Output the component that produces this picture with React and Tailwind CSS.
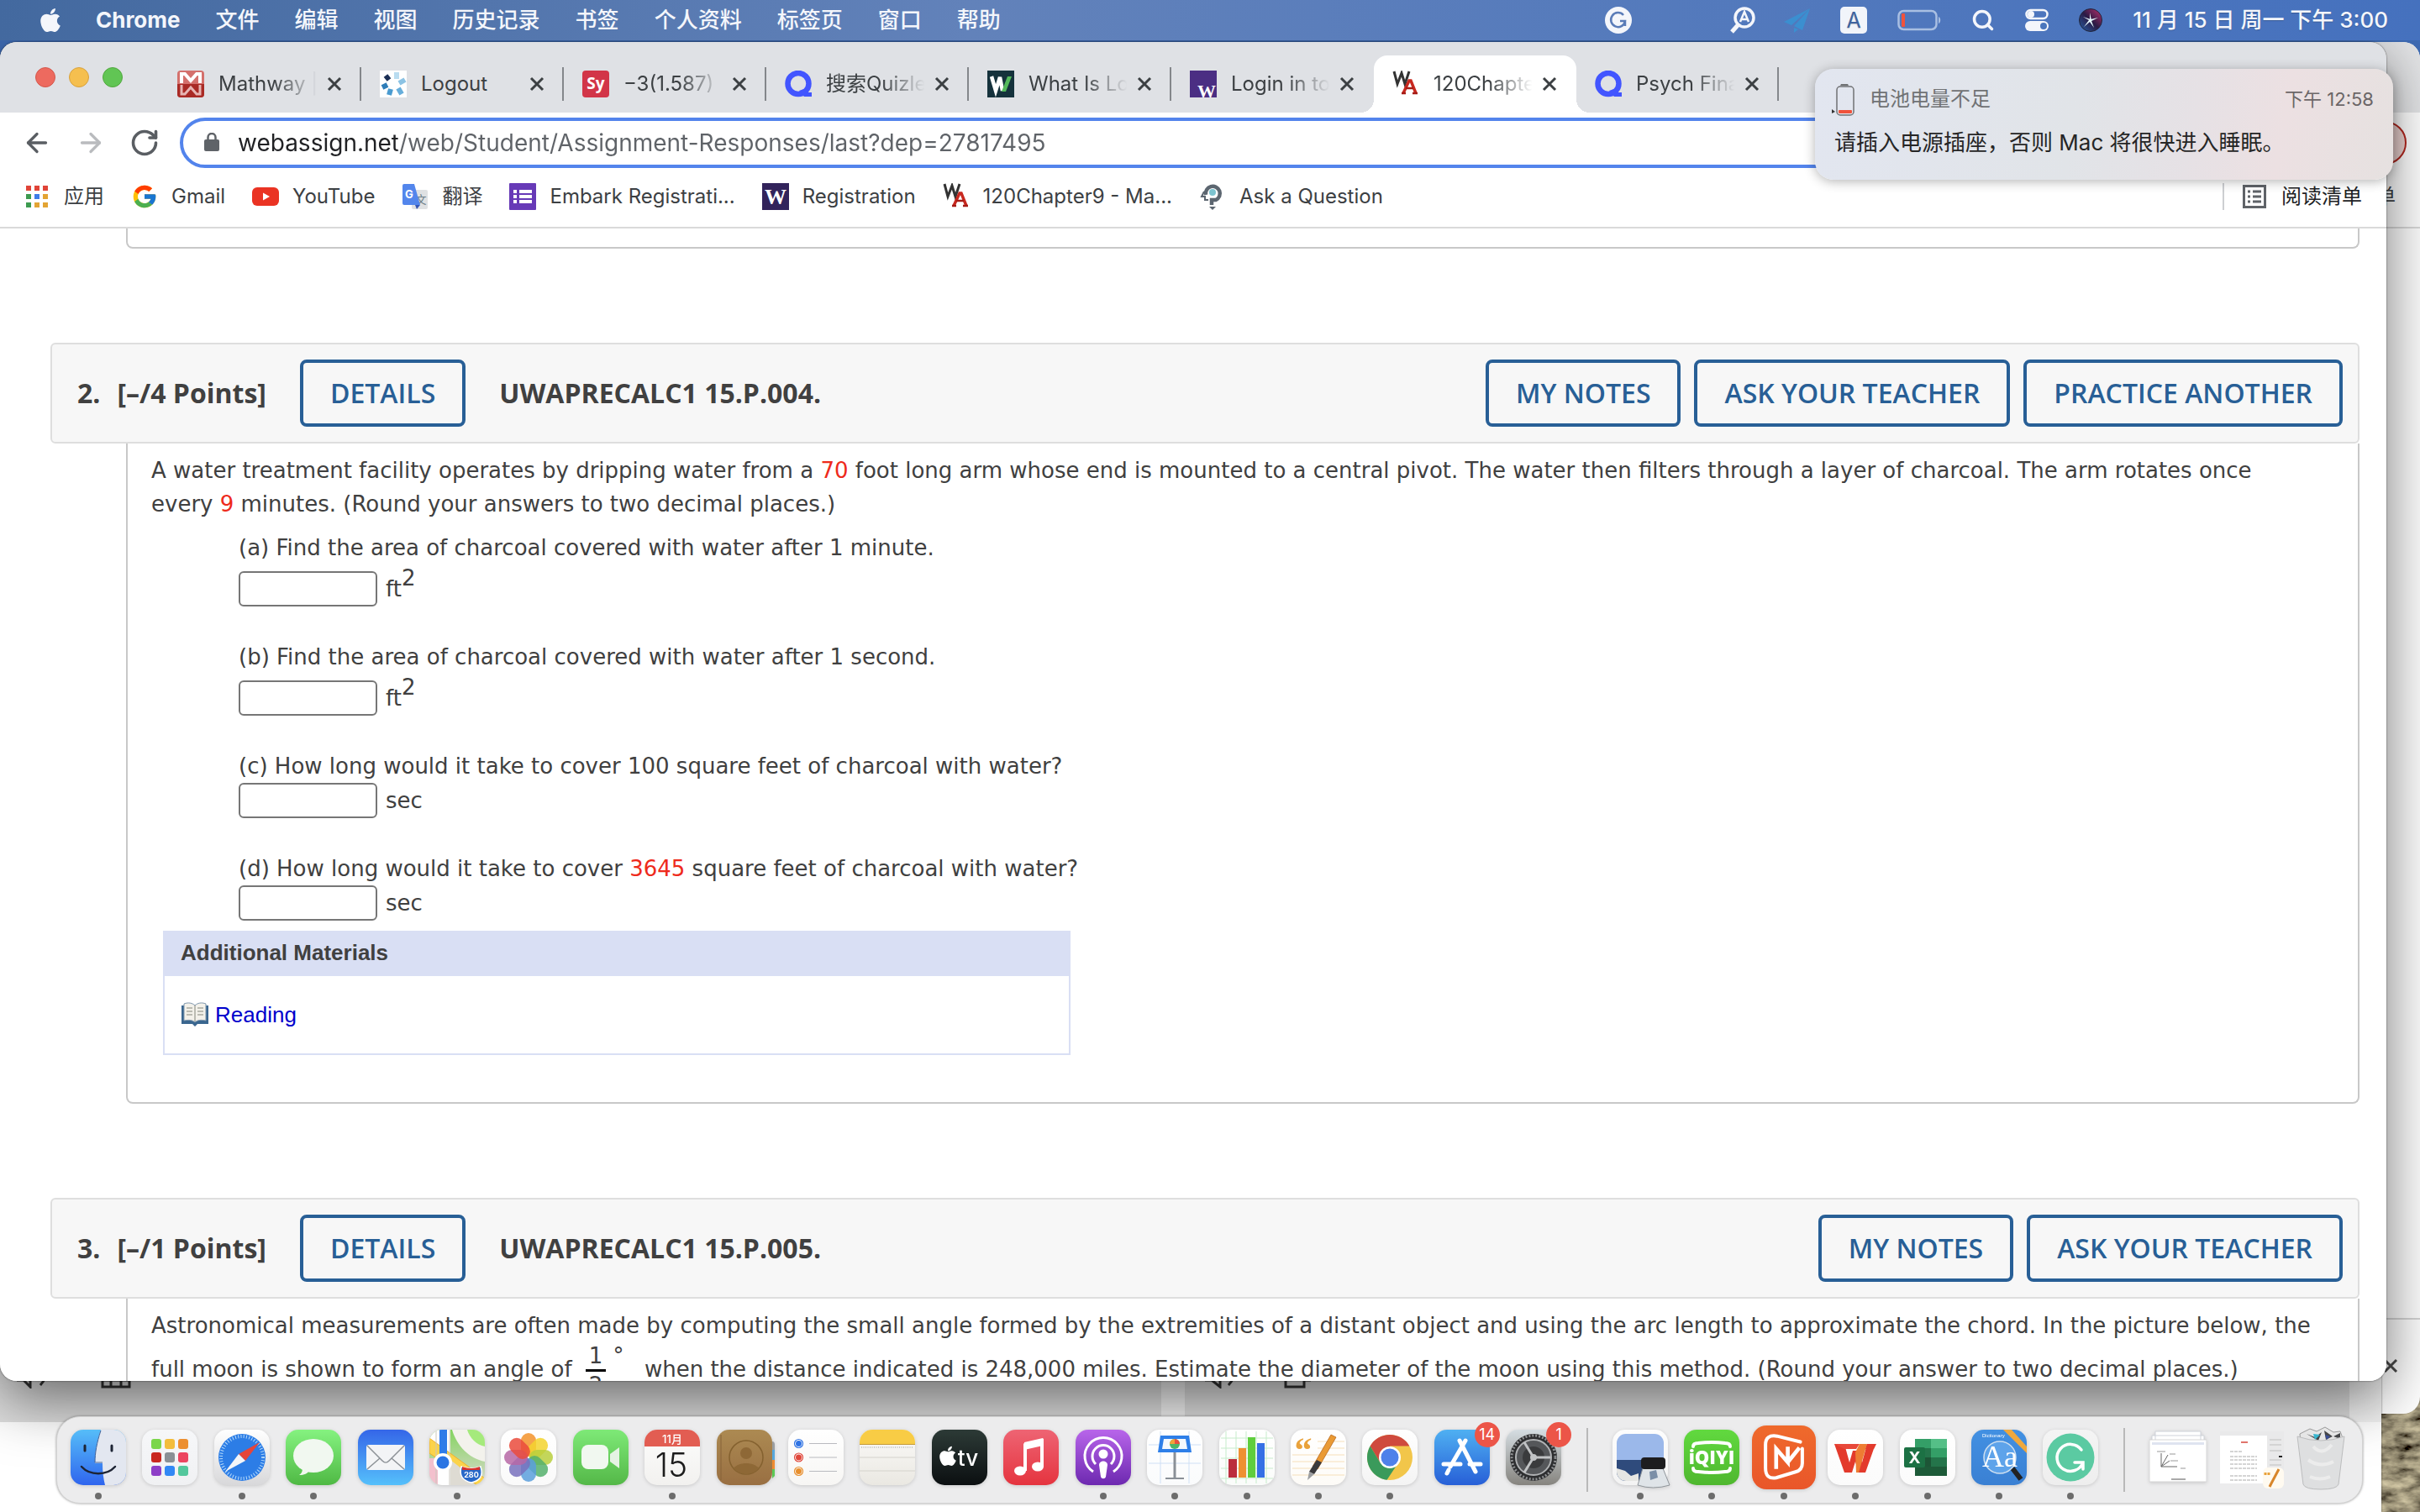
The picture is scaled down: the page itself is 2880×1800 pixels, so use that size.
import { FaApple } from 'react-icons/fa';
import { FcGoogle } from 'react-icons/fc';
import { RotateCw, ArrowLeft, ArrowRight, Search } from 'lucide-react';

const menus = ['文件', '编辑', '视图', '历史记录', '书签', '个人资料', '标签页', '窗口', '帮助'];

/* ---------- favicons ---------- */

const MathwayIcon = () => (
  <svg viewBox="0 0 32 32" className="size-8 shrink-0">
    <rect width="32" height="32" rx="4" fill="#d4706c" />
    <path d="M0 16h32v12a4 4 0 0 1-4 4H4a4 4 0 0 1-4-4z" fill="#a92a25" />
    <path d="M5 15V4h4l7 8 7-8h4v11" fill="none" stroke="#fff" strokeWidth="4" />
    <path d="M5 17v11h4l7-8 7 8h4V17" fill="none" stroke="#e7b5b3" strokeWidth="3" />
  </svg>
);

const LogoutIcon = () => (
  <svg viewBox="0 0 32 32" className="size-8 shrink-0">
    <rect width="32" height="32" fill="#fff" />
    <g strokeWidth="6">
      <path d="M20 2v8" stroke="#b9dcf0" />
      <path d="M23 15l7-4" stroke="#8cc3e4" />
      <path d="M22 21l4 7" stroke="#67aedb" />
      <path d="M13 22l-2 7" stroke="#4a9bd0" />
      <path d="M9 17l-6 3" stroke="#2e7db8" />
      <path d="M11 11L7 6" stroke="#1b2f55" />
    </g>
  </svg>
);

const SymbolabIcon = () => (
  <svg viewBox="0 0 32 32" className="size-8 shrink-0">
    <rect width="32" height="32" rx="4" fill="#d23548" />
    <text x="16" y="22" fontSize="19" fontWeight="700" fill="#fff" textAnchor="middle" fontFamily="Open Sans, sans-serif">Sy</text>
  </svg>
);

const QuizletIcon = () => (
  <svg viewBox="0 0 32 32" className="size-8 shrink-0">
    <circle cx="16" cy="15.500" r="12.500" fill="none" stroke="#4255ff" strokeWidth="6.500" />
    <path d="M17 24l8-3 3 5 4 0v5h-9z" fill="#4255ff" />
  </svg>
);

const WordIcon = () => (
  <svg viewBox="0 0 32 32" className="size-8 shrink-0">
    <rect width="32" height="32" fill="#15323c" />
    <path d="M5 7l5 17 5-16 3 16" fill="none" stroke="#fff" strokeWidth="4.500" />
    <path d="M17 25h5l7-18h-5z" fill="#54b95c" />
  </svg>
);

const UwTabIcon = () => (
  <svg viewBox="0 0 32 32" className="size-8 shrink-0">
    <rect width="32" height="32" fill="#4b2e83" />
    <text x="20" y="32" fontSize="22" fontWeight="700" fill="#fff" textAnchor="middle" fontFamily="Liberation Serif, serif">W</text>
  </svg>
);

const UwIcon = () => (
  <svg viewBox="0 0 32 32" className="size-8 shrink-0">
    <rect width="32" height="32" fill="#32235b" />
    <text x="16" y="25" fontSize="26" fontWeight="700" fill="#fff" textAnchor="middle" fontFamily="Liberation Serif, serif">W</text>
  </svg>
);

const WebAssignIcon = () => (
  <svg viewBox="0 0 32 32" className="size-8 shrink-0" fill="none">
    <path d="M2 1l4 15 5-13 4 13 5-15" stroke="#333" strokeWidth="3" />
    <path d="M13 27l7-15 2 0 6 15" stroke="#c8281f" strokeWidth="3.500" />
    <path d="M16 21h9M11 27h5M24 27h6" stroke="#a51c16" strokeWidth="2.500" />
  </svg>
);

const AppsIcon = () => (
  <svg viewBox="0 0 32 32" className="size-8 shrink-0">
    <path d="M3 3h6v6H3zM13 3h6v6h-6zM23 3h6v6h-6z" fill="#e04438" />
    <path d="M3 13h6v6H3z" fill="#3d9b50" />
    <path d="M13 13h6v6h-6z" fill="#3f7de8" />
    <path d="M23 13h6v6h-6zM13 23h6v6h-6zM23 23h6v6h-6z" fill="#e3a434" />
    <path d="M3 23h6v6H3z" fill="#3d9b50" />
  </svg>
);

const YouTubeIcon = () => (
  <svg viewBox="0 0 32 32" className="size-8 shrink-0">
    <rect y="5" width="32" height="22" rx="6" fill="#ea3323" />
    <path d="M13 11.500v9l8-4.500z" fill="#fff" />
  </svg>
);

const TranslateIcon = () => (
  <svg viewBox="0 0 32 32" className="size-8 shrink-0">
    <rect x="12" y="8" width="19" height="23" rx="2" fill="#dfe1e3" />
    <text x="23" y="24" fontSize="13" fill="#6b7d86" textAnchor="middle" fontFamily="Noto Sans CJK SC, sans-serif">文</text>
    <path d="M3 1h12l7 25H3a2 2 0 0 1-2-2V3a2 2 0 0 1 2-2z" fill="#5386ec" />
    <path d="M16 26h6l-4 5z" fill="#3656b5" />
    <text x="9" y="18" fontSize="13" fontWeight="700" fill="#fff" textAnchor="middle" fontFamily="Inter, sans-serif">G</text>
  </svg>
);

const FormIcon = () => (
  <svg viewBox="0 0 32 32" className="size-8 shrink-0">
    <rect width="32" height="32" rx="1" fill="#673ab7" />
    <path d="M5 8h4v4H5zM12 8h15v4H12zM5 14h4v4H5zM12 14h15v4H12zM5 20h4v4H5zM12 20h15v4H12z" fill="#fff" />
  </svg>
);

const AskIcon = () => (
  <svg viewBox="0 0 32 32" className="size-8 shrink-0" fill="none">
    <path d="M8 14a8.500 8.500 0 1 1 12 6h-5v6" stroke="#5c6670" strokeWidth="4.500" />
    <circle cx="16" cy="11" r="4" fill="#7cc3cf" />
    <path d="M6 10l-3 6h4v4h4" stroke="#5c6670" strokeWidth="2" />
    <path d="M12 28h8l-4 4z" fill="#5c6670" />
  </svg>
);

const Cross = () => (
  <svg viewBox="0 0 18 18" className="size-[18px]" stroke="currentColor" strokeWidth="3">
    <path d="M2 2l14 14M16 2L2 16" />
  </svg>
);

/* ---------- menu bar ---------- */

function MenuBar() {
  return (
    <header className="relative z-30 flex h-12 shrink-0 items-center justify-between bg-linear-to-r from-[#43699f] via-[#6282ba] via-40% to-[#4571be] pl-11 pr-[38px] text-[26px] leading-8 text-[#f4f6fb] text-shadow-xs">
      <nav className="flex items-center gap-[42px]">
        <FaApple className="-mr-1 size-8" />
        <button type="button" className="font-bold">Chrome</button>
        {menus.map((m) => (
          <button type="button" key={m} className="font-medium">{m}</button>
        ))}
      </nav>
      <div className="flex items-center gap-9">
        <svg viewBox="0 0 32 32" className="mr-20 size-8" fill="none">
          <circle cx="16" cy="16" r="16" fill="#f4f6fb" />
          <path d="M22 10a8.500 8.500 0 1 0 2 7h-6M24 17v6" stroke="#5a7cb8" strokeWidth="2.500" />
        </svg>
        <svg viewBox="0 0 32 32" className="-mr-1 size-8" fill="none" stroke="#f4f6fb">
          <circle cx="18" cy="13" r="11" strokeWidth="3.500" />
          <path d="M11 21l-8 9" strokeWidth="5" />
          <path d="M13 18l5-12 5 12M15 15h6" strokeWidth="2.500" />
        </svg>
        <svg viewBox="0 0 32 32" className="size-8" fill="#3b8fd0">
          <path d="M32 2L1 18l9 4zM32 2L13 23l10 5zM13 25v6l5-4z" />
        </svg>
        <svg viewBox="0 0 32 32" className="size-8">
          <rect width="32" height="32" rx="5" fill="#f1f4fa" />
          <text x="16" y="25" fontSize="25" fill="#3e639f" textAnchor="middle" fontFamily="Inter, sans-serif">A</text>
        </svg>
        <svg viewBox="0 0 52 26" className="h-[26px] w-[52px]" fill="none">
          <rect x="1.500" y="2" width="45" height="22" rx="6" stroke="#a9bfe2" strokeWidth="2.500" />
          <rect x="5" y="5" width="4" height="16" rx="1" fill="#f2523a" />
          <path d="M49 9c3 1 3 7 0 8z" fill="#a9bfe2" />
        </svg>
        <Search className="size-7" strokeWidth={3} />
        <svg viewBox="0 0 28 28" className="size-7" fill="none">
          <rect x="1.500" y="2" width="25" height="10" rx="5" stroke="#f4f6fb" strokeWidth="2.500" />
          <circle cx="7" cy="7" r="4" fill="#f4f6fb" />
          <rect y="15" width="28" height="12" rx="6" fill="#f4f6fb" />
          <circle cx="22" cy="21" r="4" fill="#4a76bd" />
        </svg>
        <svg viewBox="0 0 28 28" className="size-7">
          <defs>
            <linearGradient id="siri" x1="0" y1="1" x2="1" y2="0">
              <stop offset="0" stopColor="#2560a8" />
              <stop offset=".5" stopColor="#2a1a44" />
              <stop offset="1" stopColor="#c2316f" />
            </linearGradient>
          </defs>
          <circle cx="14" cy="14" r="13.500" fill="url(#siri)" stroke="#20263c" />
          <path d="M5 10l9 3 9-2-8 4 3 8-5-7-7 6 6-8zM13 5l2 9-2 2z" fill="#e8fbff" />
        </svg>
        <time className="font-medium whitespace-pre">11 月 15 日 周一 下午 3:00</time>
      </div>
    </header>
  );
}

/* ---------- browser chrome ---------- */

const tabs = [
  { icon: <MathwayIcon />, title: 'Mathway |' },
  { icon: <LogoutIcon />, title: 'Logout', full: true },
  { icon: <SymbolabIcon />, title: '−3(1.587)' },
  { icon: <QuizletIcon />, title: '搜索Quizle' },
  { icon: <WordIcon />, title: 'What Is Lo' },
  { icon: <UwTabIcon />, title: 'Login in to', last: true },
  { icon: <WebAssignIcon />, title: '120Chapte', active: true },
  { icon: <QuizletIcon />, title: 'Psych Fina' },
];

function Tab({ icon, title, full, last, active }) {
  return (
    <div
      className={`relative flex h-[68px] w-[241px] shrink-0 items-center pl-[22px] ${
        active
          ? 'rounded-t-2xl bg-white before:absolute before:-left-4 before:bottom-0 before:size-4 before:bg-[radial-gradient(circle_at_0_0,#dfe1e5_16px,#ffffff_16px)] after:absolute after:-right-4 after:bottom-0 after:size-4 after:bg-[radial-gradient(circle_at_100%_0,#dfe1e5_16px,#ffffff_16px)]'
          : ''
      }`}
    >
      {icon}
      <span
        className={`ml-[17px] w-[120px] whitespace-nowrap ${
          full ? '' : '[mask-image:linear-gradient(90deg,#000_55%,transparent_98%)]'
        }`}
      >
        {title}
      </span>
      <button type="button" aria-label="关闭" className="ml-[9px]">
        <Cross />
      </button>
      {!active && !last && <span className="ml-auto h-10 w-[2px] bg-[#84878b]" />}
    </div>
  );
}

const bookmarks = [
  { icon: <AppsIcon />, label: '应用' },
  { icon: <FcGoogle className="size-8 shrink-0" />, label: 'Gmail' },
  { icon: <YouTubeIcon />, label: 'YouTube' },
  { icon: <TranslateIcon />, label: '翻译' },
  { icon: <FormIcon />, label: 'Embark Registrati...' },
  { icon: <UwIcon />, label: 'Registration' },
  { icon: <WebAssignIcon />, label: '120Chapter9 - Ma...' },
  { icon: <AskIcon />, label: 'Ask a Question' },
];

function BrowserBars() {
  return (
    <div className="shrink-0 text-[24px] leading-8 text-[#3c4043]">
      <div className="flex h-[84px] items-end bg-[#dfe1e5]">
        <div className="flex w-[189px] gap-4 self-center pl-[42px]">
          <span className="size-6 rounded-full border border-[#d3574c] bg-[#ed6a5f]" />
          <span className="size-6 rounded-full border border-[#d8a13c] bg-[#f5bf4f]" />
          <span className="size-6 rounded-full border border-[#51a73e] bg-[#61c554]" />
        </div>
        {tabs.map((t) => (
          <Tab key={t.title} {...t} />
        ))}
      </div>
      <div className="flex h-[72px] items-center bg-white pl-[26px]">
        <button type="button" aria-label="后退" className="text-[#5a5e63]">
          <ArrowLeft className="size-9" strokeWidth={2.2} />
        </button>
        <button type="button" aria-label="前进" className="ml-7 text-[#b9bbbe]">
          <ArrowRight className="size-9" strokeWidth={2.2} />
        </button>
        <button type="button" aria-label="重新加载" className="ml-7 text-[#5a5e63]">
          <RotateCw className="size-9" strokeWidth={2.4} />
        </button>
        <label className="ml-6 mr-[120px] flex h-[60px] flex-1 items-center rounded-full border-4 border-[#5384ec] pl-[25px]">
          <svg viewBox="0 0 18 24" className="h-6 w-[18px]" fill="none">
            <rect y="8" width="18" height="14" rx="2" fill="#5f6368" />
            <path d="M4.500 9V5.500a4.500 4.500 0 0 1 9 0V9" stroke="#5f6368" strokeWidth="2.500" />
          </svg>
          <input
            aria-label="地址"
            defaultValue="webassign.net/web/Student/Assignment-Responses/last?dep=27817495"
            className="ml-[22px] flex-1 bg-[linear-gradient(90deg,#202124_190px,#5f6368_190px)] bg-clip-text text-[28px] leading-9 text-transparent outline-none"
          />
        </label>
      </div>
      <div className="flex h-16 items-center justify-between bg-white pr-[29px] pb-2 pl-7">
        <div className="flex items-center gap-8">
          {bookmarks.map((b) => (
            <a key={b.label} href="#bookmark" className="flex items-center gap-4 whitespace-nowrap">
              {b.icon}
              {b.label}
            </a>
          ))}
        </div>
        <button type="button" className="flex h-8 items-center gap-[18px] border-l-2 border-[#cdcfd2] pl-[22px] text-[#202124]">
          <svg viewBox="0 0 28 28" className="size-7" fill="none" stroke="#5f6368" strokeWidth="3">
            <rect x="1.500" y="1.500" width="25" height="25" />
            <path d="M6 8h3M12 8h10M6 14h3M12 14h10M6 20h3M12 20h10" />
          </svg>
          阅读清单
        </button>
      </div>
      <div className="h-[2px] bg-[#dadada]" />
    </div>
  );
}

/* ---------- assignment page ---------- */

function OutlineButton({ children }) {
  return (
    <button
      type="button"
      className="h-20 rounded-lg border-4 border-[#285f96] px-8 text-[32px] leading-10 font-semibold whitespace-nowrap text-[#285f96]"
    >
      {children}
    </button>
  );
}

function QuestionHeader({ number, points, code, actions }) {
  return (
    <div className="mr-8 ml-[60px] flex h-[120px] items-center justify-between rounded-md border-2 border-[#dedede] bg-[#f7f7f7] pr-[18px] pl-[30px] font-['Open_Sans',sans-serif] text-[32px] leading-10 font-bold text-[#404040]">
      <h2 className="flex items-center">
        <span className="mr-5">{number}.</span>
        <span className="mr-10">[–/{points} Points]</span>
        <OutlineButton>DETAILS</OutlineButton>
        <span className="ml-10">{code}</span>
      </h2>
      <div className="flex gap-4">
        {actions.map((a) => (
          <OutlineButton key={a}>{a}</OutlineButton>
        ))}
      </div>
    </div>
  );
}

const Red = ({ children }) => <span className="text-[#ee2a1c]">{children}</span>;

function Part({ id, unit, squared, children }) {
  return (
    <div className="mb-10">
      <label htmlFor={id} className="block">{children}</label>
      <div className={`flex items-center gap-[10px] ${squared ? 'pt-2' : ''}`}>
        <input id={id} className="h-[42px] w-[165px] rounded-md border-2 border-[#767676] bg-white px-2" />
        <span className="leading-10">
          {unit}
          {squared && <sup className="text-[26px]">2</sup>}
        </span>
      </div>
    </div>
  );
}

function Page() {
  return (
    <main className="min-h-0 flex-1 overflow-hidden bg-white font-['DejaVu_Sans',sans-serif] text-[26px] leading-10 text-[#404040]">
      <div className="mr-8 ml-[150px] h-6 rounded-b-lg border-2 border-t-0 border-[#c8c8c8]" />

      <section className="mt-28">
        <QuestionHeader
          number="2"
          points="4"
          code="UWAPRECALC1 15.P.004."
          actions={['MY NOTES', 'ASK YOUR TEACHER', 'PRACTICE ANOTHER']}
        />
        <div className="mr-8 ml-[150px] rounded-b-lg border-2 border-t-0 border-[#c8c8c8] pt-3 pr-10 pb-14 pl-7">
          <p>
            A water treatment facility operates by dripping water from a <Red>70</Red> foot long arm whose end is mounted
            to a central pivot. The water then filters through a layer of charcoal. The arm rotates once
            <br />
            every <Red>9</Red> minutes. (Round your answers to two decimal places.)
          </p>
          <div className="mt-3 ml-[104px]">
            <Part id="a" unit="ft" squared>(a) Find the area of charcoal covered with water after 1 minute.</Part>
            <Part id="b" unit="ft" squared>(b) Find the area of charcoal covered with water after 1 second.</Part>
            <Part id="c" unit="sec">(c) How long would it take to cover 100 square feet of charcoal with water?</Part>
            <Part id="d" unit="sec">
              (d) How long would it take to cover <Red>3645</Red> square feet of charcoal with water?
            </Part>
          </div>
          <div className="-mt-7 ml-[14px] w-[1080px] border-2 border-[#d9dff4] font-['Liberation_Sans',sans-serif]">
            <h3 className="bg-[#d9dff4] px-[19px] pt-1 pb-2 font-bold">Additional Materials</h3>
            <a href="#reading" className="flex h-[92px] items-center gap-2 px-5 text-[#0000cc]">
              <svg viewBox="0 0 32 30" className="h-[30px] w-8">
                <path d="M0 4h32v22H19l-3 3-3-3H0z" fill="#3a668f" />
                <path d="M3 2c5-2 10-1 13 2 3-3 8-4 13-2v20c-5-1-10-1-13 2-3-3-8-3-13-2z" fill="#f3f1ea" stroke="#7d95ab" />
                <path d="M16 4v19M6 7h7M6 11h7M6 15h7M19 7h7M19 11h7M19 15h7" stroke="#a9a9a0" strokeWidth="1.500" />
              </svg>
              Reading
            </a>
          </div>
        </div>
      </section>

      <section className="mt-28">
        <QuestionHeader
          number="3"
          points="1"
          code="UWAPRECALC1 15.P.005."
          actions={['MY NOTES', 'ASK YOUR TEACHER']}
        />
        <div className="mr-8 ml-[150px] border-x-2 border-[#c8c8c8] pt-3 pl-7">
          <p className="whitespace-nowrap">
            Astronomical measurements are often made by computing the small angle formed by the extremities of a distant
            object and using the arc length to approximate the chord. In the picture below, the
            <br />
            full moon is shown to form an angle of{' '}
            <span className="mr-2 inline-flex items-start gap-2 pl-2 align-middle">
              <span className="flex flex-col text-center leading-8">
                <span className="border-b-[3px] border-black px-1">1</span>
                <span>2</span>
              </span>
              <span className="leading-8">°</span>
            </span>{' '}
            &nbsp;when the distance indicated is 248,000 miles. Estimate the diameter of the moon using this method. (Round
            your answer to two decimal places.)
          </p>
        </div>
      </section>
    </main>
  );
}

/* ---------- dock ---------- */

function Tile({ from, to, children, rx = 15 }) {
  const id = `g${from}${to}`.replace(/#/g, '');
  return (
    <svg viewBox="0 0 66 66" className="size-full overflow-visible">
      <defs>
        <linearGradient id={id} x1="0" y1="0" x2="0" y2="1">
          <stop offset="0" stopColor={from} />
          <stop offset="1" stopColor={to} />
        </linearGradient>
        <clipPath id="tile">
          <rect width="66" height="66" rx="15" />
        </clipPath>
      </defs>
      <rect width="66" height="66" rx={rx} fill={`url(#${id})`} />
      {children}
    </svg>
  );
}

const petals = ['#f3932b', '#f3d42f', '#b9cf3d', '#55b06c', '#5a9fdc', '#7871bd', '#b667a6', '#ea4b3c'];
const pads = [
  ['#7bd64b', '#f3bd3c', '#ec8f31'],
  ['#c9281f', '#8a9095', '#ec4560'],
  ['#8d3fc7', '#3288f5', '#53c79c'],
];

const Finder = () => (
  <Tile from="#56bdf8" to="#2f65ee">
    <g clipPath="url(#tile)">
      <path d="M36 0c-5 15-7 28-7 40h9c0 10 1 18 3 26h25V0z" fill="#e3e7f0" />
    </g>
    <path d="M17 19v6M49 19v6" stroke="#1d2434" strokeWidth="3" strokeLinecap="round" />
    <path d="M36 1c-5 15-7 27-7 38h9" stroke="#40639b" fill="none" />
    <path d="M13 44c10 11 30 11 40 0" stroke="#1d2434" strokeWidth="2.500" fill="none" strokeLinecap="round" />
  </Tile>
);
const Launchpad = () => (
  <Tile from="#f6f7f9" to="#f0f1f3">
    {pads.map((row, y) =>
      row.map((c, x) => <rect key={c} x={11 + x * 16} y={11 + y * 16} width="12" height="12" rx="3" fill={c} />)
    )}
  </Tile>
);
const Safari = () => (
  <Tile from="#ffffff" to="#d8d8da">
    <circle cx="33" cy="33" r="28" fill="#2c7de6" />
    <circle cx="33" cy="33" r="25" fill="none" stroke="#b8dcfb" strokeWidth="4" strokeDasharray="1 2.300" />
    <path d="M54 15L29 29l8 8z" fill="#e5453a" />
    <path d="M13 50l16-21 8 8z" fill="#f3f5f8" />
  </Tile>
);
const Messages = () => (
  <Tile from="#85f280" to="#4fb944">
    <ellipse cx="33" cy="31" rx="24" ry="20" fill="#f1f8f0" />
    <path d="M20 45c0 5-1 7-4 9 6 0 10-2 12-5z" fill="#f1f8f0" />
  </Tile>
);
const Mail = () => (
  <Tile from="#3566e8" to="#55c0fb">
    <rect x="10" y="18" width="46" height="30" rx="3" fill="#f3f4f6" />
    <path d="M11 19l18 18c3 3 5 3 8 0l18-18M11 47l15-13M55 47L40 34" stroke="#8c9196" strokeWidth="1.500" fill="none" />
  </Tile>
);
const Maps = () => (
  <Tile from="#84d460" to="#dcd9d1">
    <g clipPath="url(#tile)">
      <path d="M0 34h10v32H0z" fill="#f3c0cd" />
      <path d="M0 0h25v66H10V30L0 24z" fill="#fff" />
      <path d="M0 10l66 48v14L0 28z" fill="#fbd34b" stroke="#eeb02e" />
      <path d="M8 0v66M24 0v66" stroke="#c9c6bd" />
      <path d="M27 0h39v38C47 34 33 20 27 0z" fill="#f3f2ec" />
      <path d="M45 0h21v20C56 18 48 10 45 0z" fill="#a5ea7c" />
      <path d="M25 66V36l26 20 2 10z" fill="#dedbd3" />
      <path d="M12 0h9v36h-9z" fill="#2f7ce8" />
    </g>
    <circle cx="16" cy="39" r="11" fill="#fff" />
    <circle cx="16" cy="39" r="7.500" fill="#2b75e3" />
    <path d="M38 44q12 4 23 0c4 12-2 17-11 19-10-2-15-8-12-19z" fill="#2868c8" stroke="#fff" strokeWidth="1.500" />
    <path d="M39 44q11 4 21 0v4H39z" fill="#d8322c" />
    <text x="50" y="57" fontSize="9" fontWeight="700" fill="#fff" textAnchor="middle" fontFamily="Inter, sans-serif">280</text>
  </Tile>
);
const Photos = () => (
  <Tile from="#ffffff" to="#fafafa">
    {petals.map((c, i) => (
      <rect key={c} x="24" y="4" width="18" height="28" rx="9" fill={c} opacity=".85" transform={`rotate(${i * 45} 33 33)`} />
    ))}
  </Tile>
);
const FaceTime = () => (
  <Tile from="#7ee977" to="#54b848">
    <rect x="10" y="18" width="32" height="29" rx="8" fill="#f1f8f0" />
    <path d="M44 29l11-8v25l-11-8z" fill="#e5f3e3" />
  </Tile>
);
const Calendar = () => (
  <Tile from="#fdfdfc" to="#f2f1ef">
    <path d="M0 20V15A15 15 0 0 1 15 0h36a15 15 0 0 1 15 15v5z" fill="#e25d52" />
    <text x="33" y="16" fontSize="13" fontWeight="500" fill="#fff" textAnchor="middle" fontFamily="Inter, Noto Sans CJK SC, sans-serif">11月</text>
    <text x="32" y="56" fontSize="39" fontWeight="300" fill="#1c1c1c" textAnchor="middle" fontFamily="Inter, sans-serif">15</text>
  </Tile>
);
const Contacts = () => (
  <Tile from="#ac8a52" to="#996f42">
    <path d="M66 14q3 0 3 4v6h-3z" fill="#9a9da0" />
    <path d="M66 24h3v12h-3z" fill="#56a7dc" />
    <path d="M66 36h3v11h-3z" fill="#ee8b31" />
    <path d="M66 47h3v8l-3 3z" fill="#5cc956" />
    <path d="M5 6v54" stroke="#866238" />
    <circle cx="35" cy="33" r="20" fill="none" stroke="#84612f" strokeWidth="1.500" />
    <circle cx="35" cy="28" r="7" fill="#8e6836" />
    <path d="M20 46c6-8 24-8 30 0-7 9-23 9-30 0z" fill="#8e6836" />
  </Tile>
);
const Reminders = () => (
  <Tile from="#ffffff" to="#f7f6f4">
    {['#2f73e4', '#e0463a', '#e88f2e'].map((c, i) => (
      <g key={c}>
        <circle cx="12.500" cy={16.5 + i * 16.5} r="5" fill="none" stroke={c} strokeWidth="1.200" />
        <circle cx="12.500" cy={16.5 + i * 16.5} r="3.500" fill={c} />
        <path d={`M25 ${16.5 + i * 16.5}h33`} stroke="#b9babf" />
      </g>
    ))}
  </Tile>
);
const Notes = () => (
  <Tile from="#fbfaf8" to="#eae8e2">
    <path d="M0 17V15A15 15 0 0 1 15 0h36a15 15 0 0 1 15 15v2z" fill="#f8cc45" />
    <path d="M0 17.500h66" stroke="#c49b38" />
    <path d="M2 21h62" stroke="#bbb" strokeWidth="1.500" strokeDasharray="1 1.500" />
    <path d="M0 33h66M0 49h66" stroke="#d4d2cc" />
  </Tile>
);
const AppleTv = () => (
  <Tile from="#2c3a36" to="#0b0f11">
    <g transform="translate(9 18) scale(.052)" fill="#fff">
      <path d="M318.700 268.700c-.2-36.700 16.400-64.400 50-84.800-18.800-26.900-47.200-41.700-84.700-44.600-35.500-2.800-74.300 20.700-88.500 20.700-15 0-49.400-19.700-76.400-19.700C63.300 141.200 4 184.800 4 273.500q0 39.300 14.400 81.200c12.800 36.700 59 126.700 107.200 125.200 25.200-.6 43-17.900 75.800-17.900 31.800 0 48.300 17.900 76.400 17.900 48.600-.7 90.400-82.500 102.600-119.300-65.200-30.700-61.700-90-61.700-91.900zm-56.600-164.200c27.300-32.400 24.800-61.900 24-72.500-24.100 1.400-52 16.400-67.900 34.900-17.500 19.800-27.800 44.300-25.600 71.900 26.100 2 49.900-11.400 69.500-34.300z" />
    </g>
    <text x="43" y="43" fontSize="26" fontWeight="500" fill="#fff" textAnchor="middle" fontFamily="Inter, sans-serif">tv</text>
  </Tile>
);
const Music = () => (
  <Tile from="#ee6473" to="#e5343f">
    <path d="M26 49V18l20-5v31" stroke="#fff" strokeWidth="4" fill="none" />
    <path d="M25 15l22-5v9l-22 5z" fill="#fff" />
    <ellipse cx="20" cy="49" rx="7" ry="5.500" fill="#fff" />
    <ellipse cx="41" cy="44" rx="7" ry="5.500" fill="#fff" />
  </Tile>
);
const Podcasts = () => (
  <Tile from="#b865ea" to="#6d29b0">
    <g fill="none" stroke="#fff" strokeWidth="3">
      <path d="M21 50a22 22 0 1 1 24 0" />
      <path d="M24 41a13 13 0 1 1 18 0" />
    </g>
    <circle cx="33" cy="29" r="5.500" fill="#fff" />
    <path d="M28 42c0-6 10-6 10 0l-2 14c-1 3-5 3-6 0z" fill="#fff" />
  </Tile>
);
const Keynote = () => (
  <Tile from="#ffffff" to="#fafbfc">
    <path d="M2 18h62M2 40h62M16 2v62M50 2v62" stroke="#cfe0f5" />
    <path d="M33 27v31" stroke="#8a9097" strokeWidth="3" />
    <path d="M22 58h22" stroke="#8a9097" strokeWidth="2" />
    <path d="M16 7h34l3 20H13z" fill="#2e7fe8" />
    <path d="M20 11h26l2 12H18z" fill="#f4f8fd" />
    <circle cx="33" cy="17" r="6" fill="#4cb56b" />
    <path d="M33 17v-6a6 6 0 0 1 6 6z" fill="#e8503f" />
    <path d="M33 17l-6 0a6 6 0 0 1 6-6z" fill="#f0a43a" />
  </Tile>
);
const Numbers = () => (
  <Tile from="#ffffff" to="#fafcfa">
    <path d="M8 2v62M20 2v62M32 2v62M44 2v62M56 2v62M2 10h62M2 22h62M2 34h62M2 46h62M2 58h62" stroke="#c6eccb" />
    <path d="M11 35h10v22H11z" fill="#bb2d3c" />
    <path d="M23 22h9v35h-9z" fill="#ee9131" />
    <path d="M34 9h9v48h-9z" fill="#5fce3d" />
    <path d="M45 16h9v41h-9z" fill="#3570e5" />
  </Tile>
);
const Pages = () => (
  <Tile from="#ffffff" to="#fdfbf7">
    <path d="M2 30h62M2 38h62M2 46h62M2 54h62M32 14h32M32 22h32" stroke="#f6dfb9" />
    <text x="15" y="38" fontSize="42" fontWeight="700" fill="#e9a23b" textAnchor="middle" fontFamily="Liberation Serif, serif">“</text>
    <path d="M48 6l6 3-22 38-6-3z" fill="#ea9a34" stroke="#b86a1f" strokeWidth=".8" />
    <path d="M31 36l6 3-9 14-6-3z" fill="#3a3a3c" />
    <path d="M22 50l6 3-8 7z" fill="#9c9ea0" />
  </Tile>
);
const ChromeApp = () => (
  <Tile from="#ffffff" to="#f4f4f4">
    <circle cx="33" cy="33" r="27" fill="#f2c64a" />
    <path d="M33 33L9.600 19.500A27 27 0 0 1 56.400 19.500H33z" fill="#cf4a3e" />
    <path d="M9.600 19.500L22 40l11-7V19.500z" fill="#cf4a3e" />
    <path d="M9.600 19.500a27 27 0 0 0 20 40.300L42 41 22 40z" fill="#3a9a5b" />
    <circle cx="33" cy="33" r="13" fill="#fff" />
    <circle cx="33" cy="33" r="10.500" fill="#4f81ea" />
  </Tile>
);
const AppStore = () => (
  <Tile from="#4fb0f2" to="#275fd7">
    <path d="M30 13l19 37M37 13L19 44M11 41h20M42 41h13M17 48l-2 4" stroke="#fff" strokeWidth="5" strokeLinecap="round" />
  </Tile>
);
const Settings = () => (
  <Tile from="#d5dde2" to="#86847f">
    <circle cx="33" cy="33" r="28" fill="#2d2e30" />
    <circle cx="33" cy="33" r="26" fill="none" stroke="#8f9193" strokeWidth="3" strokeDasharray="2 2" />
    <circle cx="33" cy="33" r="21" fill="#55575a" stroke="#b0b2b4" strokeWidth="2" />
    <circle cx="33" cy="33" r="13" fill="#3a3b3d" />
    <path d="M33 33h20M33 33L22 15M33 33L22 51" stroke="#c1c3c5" strokeWidth="3" />
    <circle cx="33" cy="33" r="4" fill="#c1c3c5" />
  </Tile>
);
const Preview = () => (
  <Tile from="#fdfdfd" to="#f3f3f3">
    <rect x="5" y="5" width="56" height="56" rx="11" fill="#9bb8ea" />
    <path d="M5 36h56v14a11 11 0 0 1-11 11H16A11 11 0 0 1 5 50z" fill="#2f4b7c" />
    <path d="M5 46l10 3 7 6 9-3v9H16A11 11 0 0 1 5 50z" fill="#e6e6e3" />
    <path d="M36 46h24l8 20q-20 6-38 0z" fill="#dfe4e8" stroke="#8e9499" />
    <rect x="34" y="33" width="29" height="14" rx="4" fill="#1d1d1f" />
    <path d="M44 50l8-2 2 9-9 3z" fill="#7b8fa7" />
  </Tile>
);
const Iqiyi = () => (
  <Tile from="#61d93f" to="#4fb72f">
    <path d="M11 20q0-4 6-4 16-2 32 0 6 0 6 4M11 46q0 4 6 4 16 2 32 0 6 0 6-4" stroke="#fff" strokeWidth="4" fill="none" strokeLinecap="round" />
    <text x="33" y="41" fontSize="22" fontWeight="800" fill="#fff" textAnchor="middle" fontFamily="Open Sans, sans-serif">iQIYI</text>
  </Tile>
);
const Mango = () => (
  <Tile from="#ef6a2c" to="#e9562a">
    <path d="M50 17L26 11q-12-2-12 9v24q0 12 11 10l20-6q7-2 7-9V24" stroke="#fff" strokeWidth="3.500" fill="none" strokeLinecap="round" />
    <path d="M25 45V24l12 14V22M37 38l12-15" stroke="#fff" strokeWidth="4" fill="none" />
  </Tile>
);
const Wps = () => (
  <Tile from="#ffffff" to="#fbfbfb">
    <path d="M8 17h12l6 22 4-14h7l4 14 6-22h10L45 51h-8l-4-13-4 13h-9z" fill="#e33a2c" />
    <path d="M8 17h30l-4 6H20z" fill="#e8483a" />
    <path d="M33 27l5-10h9L37 51h-3z" fill="#ee7d33" />
    <path d="M47 17h11l-3 6H45z" fill="#e33a2c" />
  </Tile>
);
const Excel = () => (
  <Tile from="#ffffff" to="#fbfbfb">
    <path d="M18 11h19v11H18z" fill="#349f67" />
    <path d="M37 11h19v11H37z" fill="#55bf87" />
    <path d="M18 22h19v11H18z" fill="#24744a" />
    <path d="M37 22h19v11H37z" fill="#349f67" />
    <path d="M18 33h19v11H18z" fill="#1d5536" />
    <path d="M37 33h19v11H37z" fill="#24744a" />
    <path d="M18 44h38v11H18z" fill="#1d5a38" />
    <rect x="5" y="21" width="25" height="24" rx="2" fill="#1c7144" />
    <text x="17.500" y="40" fontSize="19" fontWeight="700" fill="#fff" textAnchor="middle" fontFamily="Inter, sans-serif">X</text>
  </Tile>
);
const Dictionary = () => (
  <Tile from="#4290e2" to="#3a80d3">
    <path d="M38 0h10l18 20v8z" fill="#efa83d" />
    <text x="13" y="9" fontSize="6" fill="#fff" fontFamily="Liberation Sans, sans-serif">Dictionary</text>
    <path d="M49 46l10 13" stroke="#222" strokeWidth="6" />
    <circle cx="34" cy="33" r="19" fill="#5ea3ea" stroke="#cfe0f0" strokeWidth="1.500" />
    <text x="34" y="44" fontSize="36" fill="#fff" textAnchor="middle" fontFamily="Liberation Serif, serif">Aa</text>
  </Tile>
);
const Grammarly = () => (
  <Tile from="#f4f4f4" to="#eeeeee">
    <circle cx="33" cy="33" r="28.500" fill="#5bcaa2" />
    <path d="M46 24a16 16 0 1 0 2 15M38 39h10v8" stroke="#fff" strokeWidth="3.500" fill="none" strokeLinecap="round" />
  </Tile>
);

const apps = [
  { name: 'Finder', el: <Finder />, open: true },
  { name: '启动台', el: <Launchpad /> },
  { name: 'Safari', el: <Safari />, open: true },
  { name: '信息', el: <Messages />, open: true },
  { name: '邮件', el: <Mail /> },
  { name: '地图', el: <Maps />, open: true },
  { name: '照片', el: <Photos /> },
  { name: 'FaceTime', el: <FaceTime /> },
  { name: '日历', el: <Calendar />, open: true },
  { name: '通讯录', el: <Contacts /> },
  { name: '提醒事项', el: <Reminders /> },
  { name: '备忘录', el: <Notes /> },
  { name: 'Apple TV', el: <AppleTv /> },
  { name: '音乐', el: <Music /> },
  { name: '播客', el: <Podcasts />, open: true },
  { name: 'Keynote', el: <Keynote />, open: true },
  { name: 'Numbers', el: <Numbers />, open: true },
  { name: 'Pages', el: <Pages />, open: true },
  { name: 'Chrome', el: <ChromeApp />, open: true },
  { name: 'App Store', el: <AppStore />, badge: 14 },
  { name: '系统偏好设置', el: <Settings />, badge: 1 },
];

const recents = [
  { name: '预览', el: <Preview />, open: true },
  { name: '爱奇艺', el: <Iqiyi />, open: true },
  { name: '芒果TV', el: <Mango />, open: true, big: true },
  { name: 'WPS', el: <Wps />, open: true },
  { name: 'Excel', el: <Excel />, open: true },
  { name: '词典', el: <Dictionary />, open: true },
  { name: 'Grammarly', el: <Grammarly />, open: true },
];

function DockApp({ name, el, open, badge, big }) {
  return (
    <button type="button" aria-label={name} className="relative flex h-full w-[66px] items-center justify-center pb-[6px]">
      <span className={`shrink-0 drop-shadow-sm ${big ? 'size-[76px]' : 'size-[66px]'}`}>{el}</span>
      {badge && (
        <span className="absolute top-[6px] -right-3 flex size-[30px] items-center justify-center rounded-full bg-[#ec5548] text-[18px] leading-none text-white">
          {badge}
        </span>
      )}
      {open && <span className="absolute bottom-1 size-2 rounded-full bg-[#6c6c6c]" />}
    </button>
  );
}

const DockRule = () => <span className="mx-[10px] h-[76px] w-[2px] bg-[#b9b9b9]" />;

function Dock() {
  return (
    <footer className="absolute right-[68px] bottom-[10px] left-[67px] flex h-[104px] items-center justify-between rounded-[28px] border border-[#d2d2d2] bg-[#ececed] pr-5 pl-4 shadow-[0_0_3px_rgba(0,0,0,0.4)]">
      {apps.map((a) => (
        <DockApp key={a.name} {...a} />
      ))}
      <DockRule />
      {recents.map((a) => (
        <DockApp key={a.name} {...a} />
      ))}
      <DockRule />
      <svg viewBox="0 0 68 62" className="mb-2 h-[62px] w-[68px] drop-shadow-sm" fill="#fff">
        <path d="M7 1h54v12H7zM3 6h62v12H3z" stroke="#cfd3da" />
        <path d="M0 11h68v50H0z" stroke="#d5d5d5" />
        <path d="M3 14h62v3H3z" fill="#dfe4f0" />
        <path d="M14 43V27M14 43h19M14 43l8-14M14 43l10-7" stroke="#666" fill="none" />
        <path d="M9 25h10M24 28h7M25 36h9M37 45h6" stroke="#999" />
        <path d="M26 58h17" stroke="#555" />
      </svg>
      <svg viewBox="0 0 76 68" className="-mx-1 h-[68px] w-[76px]">
        <path d="M0 0h76v62H0z" fill="#fff" />
        <path d="M0 0h76v5H0zM56 5h20v57H56z" fill="#e9e9ea" />
        <path d="M25 13h8" stroke="#e0746c" strokeWidth="2" />
        <path d="M12 24h15M12 30h32M12 34h32M12 39h32M12 44h32M12 53h32M12 58h32" stroke="#aaa" strokeDasharray="4 1" />
        <path d="M59 10h14M59 16h14M59 23h14M59 34h14M59 40h14" stroke="#d4d4d4" strokeWidth="2" />
        <path d="M70 30h4" stroke="#222" strokeWidth="2" />
        <rect x="51" y="43" width="25" height="25" rx="6" fill="#fffaf0" />
        <path d="M70 45l-9 17-2 4" stroke="#d8862b" strokeWidth="3" />
        <path d="M54 49v3M58 49v3" stroke="#e9a23b" strokeWidth="3" />
      </svg>
      <svg viewBox="0 0 58 76" className="mb-1 h-[76px] w-[58px]">
        <path d="M4 9l12-6 8 3 10-5 10 6 8-1 3 8-3 6H5z" fill="#e6e6e6" stroke="#999" />
        <path d="M12 9l10 4 8-6-4 10zM33 5l10 7-8 4zM44 12l8-4 0 7z" fill="#454648" />
        <path d="M20 9l8 1-6 6z" fill="#38b6cf" />
        <path d="M34 10l6 2-4 4z" fill="#3a4f97" />
        <path d="M1 12q28 10 56 0l-7 57q-2 6-21 6T8 69z" fill="#dedfe0" stroke="#bcbdbe" />
        <path d="M20 24q10 12 22-2M14 40q14 10 30 2M16 60q12 5 24 0" stroke="#ececec" strokeWidth="4" fill="none" />
      </svg>
    </footer>
  );
}

/* ---------- things behind and above the browser ---------- */

function Wallpaper() {
  return (
    <svg className="absolute right-0 bottom-0 h-40 w-20" preserveAspectRatio="none">
      <filter id="grass">
        <feTurbulence type="fractalNoise" baseFrequency=".04 .09" numOctaves="4" seed="8" />
        <feColorMatrix values="1 0 0 0 -.18  .9 0 0 0 -.17  .6 0 0 0 -.12  0 0 0 0 1" />
      </filter>
      <rect width="100%" height="100%" filter="url(#grass)" />
    </svg>
  );
}

function BackWindow() {
  return (
    <div className="absolute inset-x-0 top-[2px] bottom-[117px] flex flex-col items-end overflow-hidden rounded-[20px] bg-white text-[24px] text-[#3c4043]">
      <div className="h-[84px] w-full shrink-0 bg-[#e4e5e7]" />
      <div className="flex h-[72px] w-full shrink-0 items-center justify-end pr-4">
        <span className="size-[52px] rounded-full border-2 border-[#b3261e] bg-[#ecd3d0]" />
      </div>
      <div className="flex h-[66px] w-full shrink-0 items-center justify-end border-b-2 border-[#dadada] pr-[29px] pb-2">单</div>
      <div className="mt-auto flex h-[114px] w-full items-start justify-end border-t-2 border-[#d5d5d5] pt-[46px] pr-[26px] text-[#4a4a4a]">
        <Cross />
      </div>
    </div>
  );
}

function LowerWindow() {
  return (
    <div className="absolute right-[46px] bottom-0 left-0 flex h-60 flex-col bg-white shadow-[0_0_2px_rgba(0,0,0,0.6)]">
      <div className="flex h-[133px] items-end bg-[#f2f2f2] pr-[38px]">
        <div className="flex h-full flex-1 items-end gap-16 bg-[#dedede] pb-10 pl-5">
          <svg viewBox="0 0 36 20" className="h-5 w-9" fill="none" stroke="#333" strokeWidth="3">
            <path d="M0 10h8l8 8V0M28 16q4-4 6-10" />
          </svg>
          <svg viewBox="0 0 36 20" className="h-5 w-9" fill="none" stroke="#333" strokeWidth="3">
            <path d="M2 0v18h32V0M2 10h32M12 10v8M24 10v8" />
          </svg>
        </div>
        <div className="h-full w-7" />
        <div className="flex h-full flex-1 items-end gap-14 bg-[#dedede] pb-10 pl-6">
          <svg viewBox="0 0 36 20" className="h-5 w-9" fill="none" stroke="#333" strokeWidth="3">
            <path d="M0 10h8l10 8V0M28 16q4-4 6-10" />
          </svg>
          <svg viewBox="0 0 36 20" className="h-5 w-9" fill="none" stroke="#333" strokeWidth="3">
            <path d="M4 0v18h22v-8h8" />
          </svg>
        </div>
      </div>
    </div>
  );
}

function Notification() {
  return (
    <aside className="absolute top-[34px] right-8 h-[132px] w-[688px] rounded-[22px] bg-[linear-gradient(100deg,#e2e6f0_0%,#e1e4e8_45%,#e6e1e5_65%,#ece0e2_80%,#e6e1e0_100%)] px-[23px] pt-4 shadow-[0_2px_14px_rgba(0,0,0,0.3)]">
      <div className="flex items-center text-[24px] leading-10 text-[#707274]">
        <svg viewBox="0 0 30 40" className="-ml-1 mr-4 h-10 w-[30px]" fill="none">
          <path d="M12 2h8l1 2H11z" fill="#707274" />
          <rect x="7" y="5" width="20" height="34" rx="4" stroke="#707274" strokeWidth="1.500" />
          <rect x="9" y="33" width="16" height="4" rx="1" fill="#f0523b" />
          <path d="M1 32l4 3-4 2z" fill="#333" />
        </svg>
        电池电量不足
        <time className="ml-auto text-[22px] text-[#6b6667]">下午 12:58</time>
      </div>
      <p className="mt-3 text-[26px] leading-10 text-[#262626]">请插入电源插座，否则 Mac 将很快进入睡眠。</p>
    </aside>
  );
}

export default function App() {
  return (
    <div className="flex h-screen flex-col overflow-hidden bg-[#3f6cb5] font-['Inter','Noto_Sans_CJK_SC',sans-serif]">
      <MenuBar />
      <div className="relative min-h-0 flex-1">
        <Wallpaper />
        <BackWindow />
        <LowerWindow />
        <div className="absolute top-[2px] right-10 bottom-[156px] left-0 rounded-[20px] shadow-[0_0_2px_rgba(0,0,0,0.7),0_20px_70px_rgba(0,0,0,0.55)]">
          <div className="flex h-full flex-col overflow-hidden rounded-[20px]">
            <BrowserBars />
            <Page />
          </div>
        </div>
        <Dock />
        <Notification />
      </div>
    </div>
  );
}
